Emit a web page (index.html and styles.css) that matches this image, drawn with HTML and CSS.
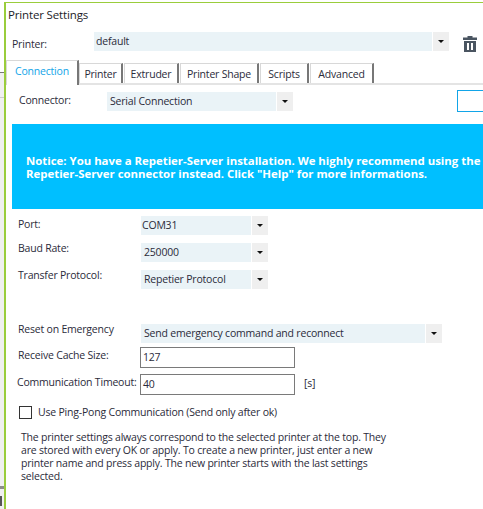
FILE: index.html
```html
<!DOCTYPE html>
<html lang="en">
<head>
    <meta charset="UTF-8">
    <title>Printer Settings</title>
    <link rel="stylesheet" href="styles.css">
</head>
<body>
    <div class="desktop">
        <div class="strip">
            <div class="strip-line"></div>
            <div class="strip-fill"></div>
            <div class="strip-line light"></div>
            <div class="strip-fill long"></div>
            <div class="strip-band"></div>
            <div class="strip-mark"></div>
        </div>

        <div class="dialog">
            <div class="title">Printer Settings</div>

            <div class="printer-row">
                <span class="printer-label">Printer:</span>
                <div class="combo combo-printer">
                    <div class="combo-text">default</div>
                    <div class="combo-btn"><i class="arrow"></i></div>
                </div>
                <svg class="trash" width="14" height="16" viewBox="0 0 14 16">
                    <path fill="#4a5561" d="M4.5 0h5v1.5h4.500v2.500H0V1.500h4.500zM1 5h12v11H1zM4 7v7h2V7zM8 7v7h2V7z" fill-rule="evenodd"/>
                </svg>
            </div>

            <div class="tabs">
                <div class="tab active">Connection</div>
                <div class="tab tab-printer">Printer</div>
                <div class="tab tab-extruder">Extruder</div>
                <div class="tab tab-shape">Printer Shape</div>
                <div class="tab tab-scripts">Scripts</div>
                <div class="tab tab-advanced">Advanced</div>
            </div>

            <div class="panel">
                <div class="row row-connector">
                    <span class="label connector-label">Connector:</span>
                    <div class="combo combo-connector">
                        <div class="combo-text">Serial Connection</div>
                        <div class="combo-btn"><i class="arrow"></i></div>
                    </div>
                    <div class="help-box"></div>
                </div>

                <div class="notice">
                    Notice: You have a Repetier-Server installation. We highly recommend using the<br>
                    Repetier-Server connector instead. Click "Help" for more informations.
                </div>

                <div class="row row-port">
                    <span class="label">Port:</span>
                    <div class="combo combo-short">
                        <div class="combo-text tight">COM31</div>
                        <div class="combo-btn"><i class="arrow"></i></div>
                    </div>
                </div>
                <div class="row row-baud">
                    <span class="label raised">Baud Rate:</span>
                    <div class="combo combo-short">
                        <div class="combo-text">250000</div>
                        <div class="combo-btn"><i class="arrow"></i></div>
                    </div>
                </div>
                <div class="row row-protocol">
                    <span class="label raised">Transfer Protocol:</span>
                    <div class="combo combo-short">
                        <div class="combo-text">Repetier Protocol</div>
                        <div class="combo-btn"><i class="arrow"></i></div>
                    </div>
                </div>

                <div class="row row-reset">
                    <span class="label raised">Reset on Emergency</span>
                    <div class="combo combo-long">
                        <div class="combo-text">Send emergency command and reconnect</div>
                        <div class="combo-btn"><i class="arrow"></i></div>
                    </div>
                </div>
                <div class="row row-cache">
                    <span class="label">Receive Cache Size:</span>
                    <div class="field">127</div>
                </div>
                <div class="row row-timeout">
                    <span class="label label-timeout">Communication Timeout:</span>
                    <div class="field">40</div>
                    <span class="unit">[s]</span>
                </div>

                <div class="check-row">
                    <span class="checkbox"></span>
                    <span>Use Ping-Pong Communication (Send only after ok)</span>
                </div>

                <p class="info">The printer settings always correspond to the selected printer at the top. They<br>
                are stored with every OK or apply. To create a new printer, just enter a new<br>
                printer name and press apply. The new printer starts with the last settings<br>
                selected.</p>
            </div>
        </div>
    </div>
</body>
</html>
```

FILE: styles.css
```css
html, body {
    margin: 0;
    padding: 0;
    height: 100%;
    overflow: hidden;
    background-color: #fff;
}
body {
    font-family: "Open Sans", "Liberation Sans", sans-serif;
    font-size: 10.5px;
    letter-spacing: -0.2px;
    line-height: 13px;
    color: #2b2b3a;
}
.desktop {
    display: flex;
    height: 509px;
}

/* bit of the main window showing to the left of the dialog */
.strip {
    width: 4px;
    flex: none;
    padding-top: 72px;
    box-sizing: border-box;
}
.strip-line {
    height: 1px;
    background-color: #777;
}
.strip-line.light {
    background-color: #ccc;
}
.strip-fill {
    height: 24px;
    background-color: #f0f0f0;
}
.strip-fill.long {
    height: 388px;
}
.strip-band {
    height: 3px;
    background-color: #8c8c8c;
}
.strip-mark {
    height: 20px;
    box-sizing: border-box;
    background-color: #f0f0f0;
    border-top: 7px solid #f0f0f0;
    background-image: linear-gradient(#555, #555);
    background-size: 2px 10px;
    background-repeat: no-repeat;
}

.dialog {
    flex: none;
    width: 479px;
    height: 507px;
    margin-top: 2px;
    border-top: 1px solid #9acd3c;
    border-left: 2px solid #9acd3c;
    box-sizing: border-box;
    background-color: #fff;
    overflow: hidden;
}
.title {
    padding: 5px 0 0 2px;
    height: 14px;
    font-size: 11.5px;
    letter-spacing: -0.15px;
    color: #1c1c28;
}

/* combos */
.combo {
    display: flex;
    height: 19px;
    flex: none;
}
.combo-text {
    flex: 1;
    background-color: #eaf3f7;
    padding-left: 3px;
    line-height: 19px;
    margin-right: 1px;
    white-space: nowrap;
}
.combo-text.tight {
    padding-left: 1px;
}
.combo-btn {
    width: 16px;
    background-color: #efefef;
    display: flex;
    align-items: center;
    justify-content: center;
}
.arrow {
    width: 0;
    height: 0;
    border-left: 3px solid transparent;
    border-right: 3px solid transparent;
    border-top: 3px solid #111;
}
.combo-printer {
    width: 355px;
    margin-left: 42px;
}
.combo-printer .combo-text {
    line-height: 18px;
    padding-left: 2px;
}
.combo-connector {
    width: 186px;
    margin-left: 40px;
}
.combo-short {
    width: 127px;
}
.combo-long {
    width: 301px;
}

.printer-row {
    display: flex;
    margin-top: 10px;
    padding-left: 6px;
}
.printer-label {
    width: 40px;
    padding-top: 6px;
}
.trash {
    margin: 4px 0 0 14px;
}

/* tabs */
.tabs {
    display: flex;
    align-items: flex-end;
    height: 24px;
    margin-top: 7px;
    border-bottom: 2px solid #e4e4e4;
}
.tab {
    height: 20px;
    line-height: 20px;
    box-sizing: border-box;
    text-align: center;
    background-color: #fff;
    border-top: 1px solid #d8d8d8;
    border-left: 1px solid #d8d8d8;
    border-right: 2px solid #777;
    margin-right: 1px;
}
.tab.active {
    width: 73px;
    height: 25px;
    margin-bottom: -2px;
    margin-right: 0;
    padding-bottom: 4px;
    line-height: 21px;
    color: #12a5e8;
}
.tab-printer { width: 44px; }
.tab-extruder { width: 55px; }
.tab-shape { width: 79px; }
.tab-scripts { width: 49px; }
.tab-advanced { width: 64px; }

.panel {
    padding-left: 6px;
}
.row {
    display: flex;
    align-items: flex-start;
}
.label {
    width: 129px;
    flex: none;
    padding: 2px 0 0 6px;
    box-sizing: border-box;
    white-space: nowrap;
}
.label.raised {
    margin-top: -1px;
    padding-top: 0;
}

.row-connector {
    margin-top: 7px;
}
.label.connector-label {
    width: 55px;
    padding-left: 7px;
    padding-top: 2px;
}
.help-box {
    width: 40px;
    height: 20px;
    margin: -2px 0 0 164px;
    border: 1px solid #12a5e8;
    flex: none;
}
.notice {
    width: 471px;
    height: 85px;
    box-sizing: border-box;
    margin-top: 12px;
    padding: 30px 0 0 14px;
    background-color: #00bfff;
    color: #fff;
    font-size: 11.4px;
    letter-spacing: 0;
    font-weight: bold;
    white-space: nowrap;
}
.row-port {
    margin-top: 7px;
}
.row-baud {
    margin-top: 8px;
}
.row-protocol {
    margin-top: 8px;
}
.row-reset {
    margin-top: 35px;
}
.row-cache {
    margin-top: 4px;
}
.row-timeout {
    margin-top: 6px;
}
.label.label-timeout {
    padding-left: 5px;
}
.field {
    width: 155px;
    height: 21px;
    box-sizing: border-box;
    margin-left: -1px;
    border: 1px solid #7a7a7a;
    padding-left: 2px;
    line-height: 19px;
    flex: none;
}
.unit {
    margin-left: 9px;
    padding-top: 3px;
}
.check-row {
    display: flex;
    align-items: center;
    gap: 6px;
    margin-top: 11px;
    padding-left: 7px;
}
.checkbox {
    width: 13px;
    height: 13px;
    box-sizing: border-box;
    border: 1px solid #333;
    flex: none;
}
.info {
    margin: 12px 0 0 9px;
    white-space: nowrap;
}
```
